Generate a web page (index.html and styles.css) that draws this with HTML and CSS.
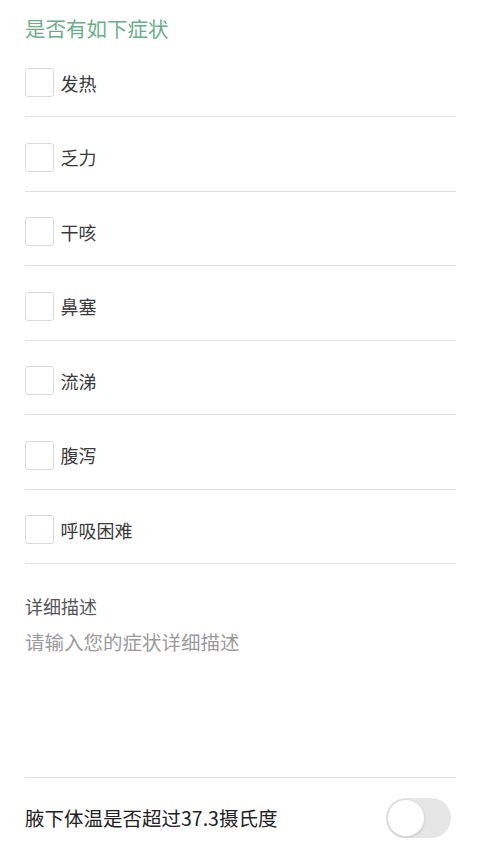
FILE: index.html
```html
<!DOCTYPE html>
<html lang="zh-CN">
<head>
<meta charset="utf-8">
<title>症状</title>
<link rel="stylesheet" href="styles.css">
</head>
<body>
<div class="page">
  <div class="title">是否有如下症状</div>
  <ul class="list">
    <li class="row"><span class="box"></span><span class="label">发热</span></li>
    <li class="row"><span class="box"></span><span class="label">乏力</span></li>
    <li class="row"><span class="box"></span><span class="label">干咳</span></li>
    <li class="row"><span class="box"></span><span class="label">鼻塞</span></li>
    <li class="row"><span class="box"></span><span class="label">流涕</span></li>
    <li class="row"><span class="box"></span><span class="label">腹泻</span></li>
    <li class="row"><span class="box"></span><span class="label">呼吸困难</span></li>
  </ul>
  <div class="desc">
    <div class="desc-label">详细描述</div>
    <textarea class="desc-input" placeholder="请输入您的症状详细描述"></textarea>
  </div>
  <div class="switch-row">
    <span class="switch-label">腋下体温是否超过37.3摄氏度</span>
    <span class="switch"><span class="knob"></span></span>
  </div>
</div>
</body>
</html>
```

FILE: styles.css
```css
html, body {
  margin: 0;
  padding: 0;
  background: #fff;
}
body {
  font-family: "Noto Sans CJK SC", "Noto Sans", sans-serif;
  color: #333;
}
.page {
  padding: 0 24px 0 25px;
}
.title {
  padding-top: 15px;
  height: 27.5px;
  line-height: 27.5px;
  font-size: 20.5px;
  color: #6aae86;
}
.list {
  list-style: none;
  margin: 0;
  padding: 0;
}
.row {
  display: flex;
  align-items: center;
  padding: 25.5px 0 19px;
  border-bottom: 1px solid #e0e0e0;
}
.box {
  box-sizing: border-box;
  width: 29px;
  height: 29px;
  border: 1px solid #d9d9d9;
  border-radius: 3px;
  background: #fff;
  flex: none;
}
.label {
  margin-left: 6.5px;
  font-size: 18px;
  line-height: 24px;
  color: #3a3a3a;
}
.desc {
  padding-top: 30px;
  border-bottom: 1px solid #e0e0e0;
}
.desc-label {
  font-size: 18px;
  line-height: 24px;
  color: #555;
}
.desc-input {
  display: block;
  box-sizing: border-box;
  width: 100%;
  height: 148px;
  margin: 11px 0 0;
  padding: 0;
  border: none;
  outline: none;
  resize: none;
  background: transparent;
  font-family: "Noto Sans CJK SC", "Noto Sans", sans-serif;
  font-size: 19.5px;
  line-height: 26px;
  color: #333;
}
.desc-input::placeholder {
  color: #9a9a9a;
}
.switch-row {
  display: flex;
  align-items: center;
  justify-content: space-between;
  padding-top: 20px;
}
.switch-label {
  font-size: 19.5px;
  line-height: 40px;
  color: #222;
}
.switch {
  box-sizing: border-box;
  position: relative;
  width: 65px;
  height: 40px;
  margin-right: 5px;
  border-radius: 20px;
  background: #e6e6e6;
  flex: none;
}
.knob {
  position: absolute;
  left: 1px;
  top: 1px;
  box-sizing: border-box;
  width: 38px;
  height: 38px;
  border-radius: 50%;
  background: #fff;
  border: 1px solid #dcdcdc;
  box-shadow: 0 1px 2px rgba(0,0,0,0.12);
}
```
